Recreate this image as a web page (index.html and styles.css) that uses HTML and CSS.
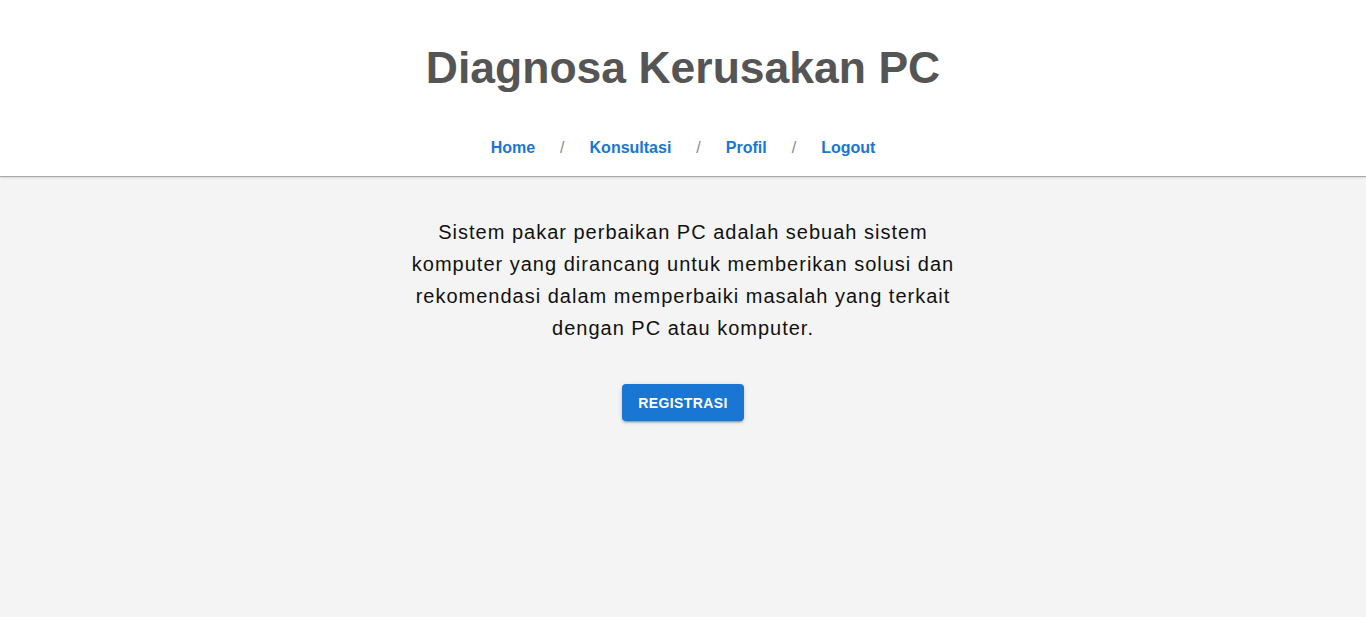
FILE: index.html
```html
<!DOCTYPE html>
<html lang="id">
<head>
<meta charset="utf-8">
<title>Diagnosa Kerusakan PC</title>
<link rel="stylesheet" href="styles.css">
</head>
<body>
<header class="header">
  <h1 class="title">Diagnosa Kerusakan PC</h1>
  <nav class="nav">
    <a href="#" class="nav-link">Home</a>
    <span class="sep">/</span>
    <a href="#" class="nav-link">Konsultasi</a>
    <span class="sep">/</span>
    <a href="#" class="nav-link">Profil</a>
    <span class="sep">/</span>
    <a href="#" class="nav-link">Logout</a>
  </nav>
</header>
<main class="main">
  <p class="intro">Sistem pakar perbaikan PC adalah sebuah sistem komputer yang dirancang untuk memberikan solusi dan rekomendasi dalam memperbaiki masalah yang terkait dengan PC atau komputer.</p>
  <button class="btn">REGISTRASI</button>
</main>
</body>
</html>
```
FILE: styles.css
```css
html, body {
  margin: 0;
  padding: 0;
  height: 100%;
}
body {
  background: #f4f4f4;
  font-family: "Liberation Sans", Arial, sans-serif;
}
.header {
  background: #fff;
  border-bottom: 1px solid #a8a8a8;
  box-shadow: 0 1px 2px rgba(0,0,0,0.12);
  text-align: center;
  padding-top: 40px;
  height: 136px;
}
.title {
  margin: 0;
  font-size: 44.5px;
  line-height: 56px;
  font-weight: bold;
  color: #555;
}
.nav {
  margin-top: 43px;
  display: flex;
  justify-content: center;
  gap: 25px;
  font-size: 16px;
  font-weight: bold;
}
.nav-link {
  color: #1976d2;
  text-decoration: none;
}
.sep {
  color: #888;
  font-weight: normal;
}
.main {
  display: flex;
  flex-direction: column;
  align-items: center;
  padding-top: 39px;
}
.intro {
  margin: 0;
  max-width: 560px;
  text-align: center;
  font-family: "Liberation Sans", Arial, sans-serif;
  font-size: 20px;
  line-height: 32px;
  letter-spacing: 1px;
  color: #111;
}
.btn {
  margin-top: 40px;
  background: #1976d2;
  color: #fff;
  border: none;
  border-radius: 4px;
  height: 37px;
  padding: 0 16px;
  font-family: "Liberation Sans", Arial, sans-serif;
  font-weight: bold;
  font-size: 14px;
  letter-spacing: 0.4px;
  box-shadow: 0 3px 1px -2px rgba(0,0,0,0.2), 0 2px 2px 0 rgba(0,0,0,0.14), 0 1px 5px 0 rgba(0,0,0,0.12);
  cursor: pointer;
}
```
